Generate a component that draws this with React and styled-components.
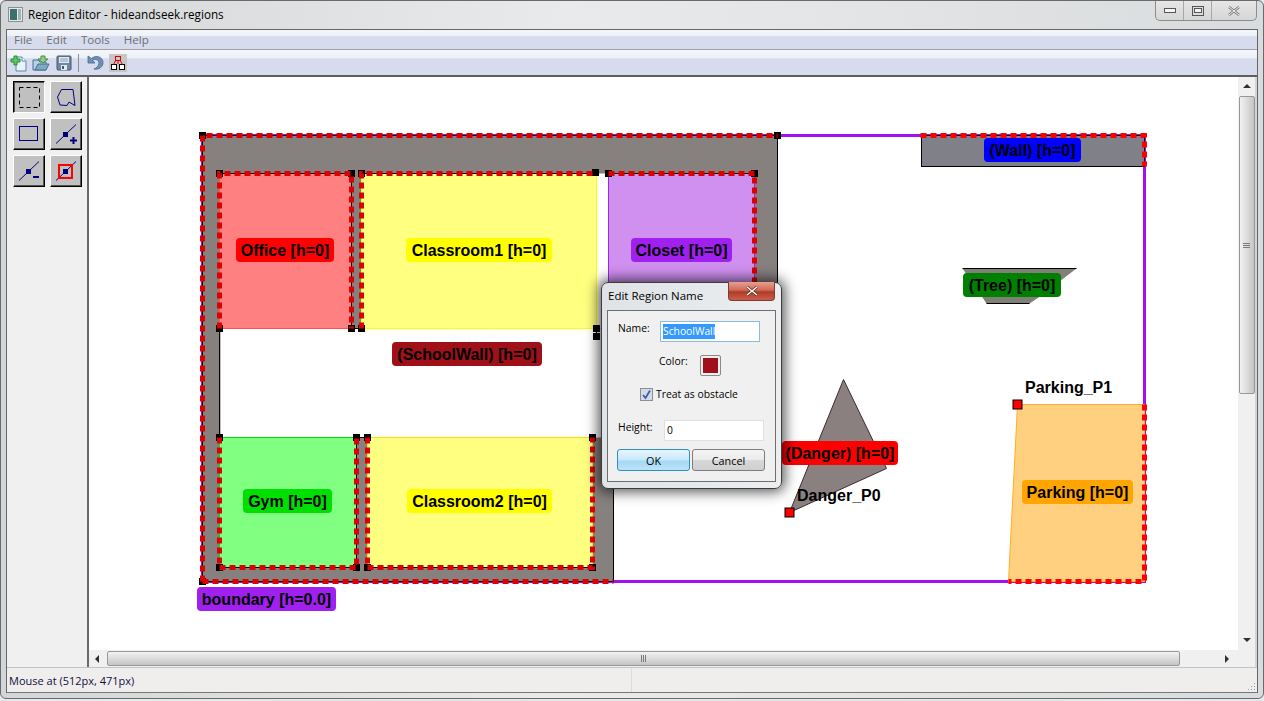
import React from 'react';
import styled, { createGlobalStyle } from 'styled-components';

const uiFont = '"Open Sans", "Noto Sans", "Liberation Sans", sans-serif';

const GlobalStyle = createGlobalStyle`
  html, body {
    margin: 0;
    padding: 0;
    background: #e6e8ea;
    overflow: hidden;
  }
`;

const Win = styled.div`
  box-sizing: border-box;
  width: 1264px;
  height: 699px;
  display: flex;
  flex-direction: column;
  position: relative;
  overflow: hidden;
  background: linear-gradient(90deg, #d3d6d8 0, #e9eaeb 45%, #d9dcde 100%);
  border: 1px solid #6a6a6a;
  border-radius: 6px;
  font-family: ${uiFont};
  font-size: 11.5px;
  color: #000;
`;

const TitleBar = styled.div`
  height: 28px;
  flex: none;
  display: flex;
  align-items: flex-start;
  padding: 6px 6px 0 7px;
  box-sizing: border-box;
  gap: 5px;
`;

const TitleText = styled.div`
  flex: 1;
  margin-top: -1px;
  font-size: 11.7px;
  line-height: 16px;
`;

const CaptionGroup = styled.div`
  display: flex;
  margin-top: -6px;
  height: 19px;
  border: 1px solid #8c8c8c;
  border-top: none;
  border-radius: 0 0 5px 5px;
  background: linear-gradient(#e6e6e6, #d6d6d6);
`;

const CaptionBtn = styled.div`
  width: ${({ $w }) => $w}px;
  display: flex;
  align-items: center;
  justify-content: center;
  border-right: ${({ $last }) => ($last ? 'none' : '1px solid #a8a8a8')};
`;

const Frame = styled.div`
  flex: none;
  height: 664px;
  margin: 0 5px;
  display: flex;
  flex-direction: column;
  border: 1px solid #666;
  border-bottom-color: #777;
  box-sizing: border-box;
  background: #f0f0f0;
`;

const barGradient = `linear-gradient(#f4f6fa 0, #eef1f8 30%, #d6dcee 35%, #d6dcee 100%)`;

const MenuBar = styled.div`
  height: 19px;
  flex: none;
  display: flex;
  align-items: center;
  padding-left: 7px;
  gap: 14px;
  background: ${barGradient};
  border-bottom: 1px solid #a0a0a8;
  color: #6f6f6f;
  font-size: 11.6px;
`;

const ToolBar = styled.div`
  height: 25px;
  flex: none;
  display: flex;
  align-items: center;
  padding-left: 2px;
  gap: 5px;
  background: ${barGradient};
  border-bottom: 2px solid #5e5e5e;
`;

const ToolIcon = styled.div`
  width: 18px;
  height: 18px;
  display: flex;
  align-items: center;
  justify-content: center;
  background: ${({ $on }) => ($on ? '#c6c6c6' : 'transparent')};
`;

const ToolSep = styled.div`
  width: 1px;
  height: 18px;
  margin-right: 2px;
  background: #8a8f96;
`;

const Body = styled.div`
  flex: 1;
  min-height: 0;
  display: flex;
`;

const SidePanel = styled.div`
  width: 82px;
  flex: none;
  box-sizing: border-box;
  padding: 4px 0 0 6px;
  background: #f0f0f0;
  border-right: 2px solid #6a6a6a;
`;

const ToolGrid = styled.div`
  display: grid;
  grid-template-columns: 32px 32px;
  grid-auto-rows: 32px;
  gap: 5px;
`;

const ToolBtn = styled.div`
  box-sizing: border-box;
  background: #c0c0c0;
  border: 1px solid;
  border-color: ${({ $on }) => ($on ? '#000 #fff #fff #000' : '#fff #000 #000 #fff')};
  box-shadow: ${({ $on }) => ($on ? 'inset 1px 1px 0 #555' : 'inset -1px -1px 0 #555')};
  display: flex;
  align-items: center;
  justify-content: center;
`;

const ViewGrid = styled.div`
  flex: 1;
  min-width: 0;
  display: grid;
  grid-template-columns: 1fr 17px;
  grid-template-rows: 1fr 17px;
  background: #f0f0f0;
  border-right: 2px solid #d4d4d4;
`;

const Canvas = styled.div`
  position: relative;
  background: #fff;
  overflow: hidden;
`;

const Drawing = styled.svg`
  position: absolute;
  left: 0;
  top: 0;
  width: 100%;
  height: 100%;
  display: block;
`;

const RegionLabel = styled.div`
  position: absolute;
  left: ${({ $x }) => $x - 89}px;
  top: ${({ $y }) => $y - 77}px;
  box-sizing: border-box;
  width: ${({ $w }) => $w}px;
  height: 24px;
  padding-top: 1px;
  display: flex;
  align-items: center;
  justify-content: center;
  background: ${({ $bg }) => $bg};
  border-radius: 4px;
  font-family: "Liberation Sans", Arial, sans-serif;
  font-weight: 700;
  font-size: 16px;
  white-space: nowrap;
  color: #000;
`;

const PointLabel = styled.div`
  position: absolute;
  left: ${({ $x }) => $x - 89}px;
  top: ${({ $y }) => $y - 77}px;
  font-family: "Liberation Sans", Arial, sans-serif;
  font-weight: 700;
  font-size: 16px;
  line-height: 18px;
  white-space: nowrap;
  color: #000;
`;

const VBar = styled.div`
  display: flex;
  flex-direction: column;
  align-items: center;
  background: #f0f0f0;
`;

const HBar = styled.div`
  display: flex;
  align-items: center;
  background: #f0f0f0;
`;

const BarSpace = styled.div`
  flex: 1;
`;

const ArrowCell = styled.div`
  flex: none;
  width: ${({ $w }) => $w}px;
  height: ${({ $h }) => $h}px;
  display: flex;
  align-items: center;
  justify-content: center;
`;

const Thumb = styled.div`
  box-sizing: border-box;
  flex: none;
  display: flex;
  align-items: center;
  justify-content: center;
  border: 1px solid #979797;
  border-radius: 2px;
  ${({ $vertical }) =>
    $vertical
      ? `width: 16px; height: 298px; background: linear-gradient(90deg, #f2f2f2, #dcdcdc 50%, #c4c4c4);`
      : `width: 1073px; height: 15px; background: linear-gradient(#f2f2f2, #dcdcdc 50%, #c4c4c4);`}
`;

const Grip = styled.div`
  display: flex;
  flex-direction: ${({ $vertical }) => ($vertical ? 'column' : 'row')};
  gap: 1px;
  & > i {
    display: block;
    background: #7a7a7a;
    ${({ $vertical }) => ($vertical ? 'width: 7px; height: 1px;' : 'width: 1px; height: 7px;')}
  }
`;

const Corner = styled.div`
  background: #f0f0f0;
`;

const StatusBar = styled.div`
  height: 24px;
  flex: none;
  display: flex;
  align-items: center;
  background: #f0eded;
  border-top: 1px solid #c4c4c4;
  position: relative;
`;

const StatusCell = styled.div`
  width: 625px;
  height: 100%;
  box-sizing: border-box;
  padding-left: 2px;
  display: flex;
  align-items: center;
  color: #101040;
  font-size: 11px;
  border-right: 1px solid #dcdcdc;
`;

const SizeGrip = styled.svg`
  position: absolute;
  right: 1px;
  bottom: 1px;
`;

const Dialog = styled.div`
  position: absolute;
  left: 600px;
  top: 281px;
  width: 181px;
  height: 207px;
  box-sizing: border-box;
  border: 1px solid #3c3c3c;
  border-radius: 7px;
  background: linear-gradient(90deg, #dfe3e6, #eceef0);
  box-shadow: 0 0 13px 3px rgba(0, 0, 0, 0.65);
  padding: 0 5px 6px;
  display: flex;
  flex-direction: column;
`;

const DialogTitle = styled.div`
  height: 27px;
  flex: none;
  box-sizing: border-box;
  display: flex;
  align-items: center;
  padding: 0 0 2px 1px;
  font-size: 11.5px;
`;

const CloseBtn = styled.div`
  position: absolute;
  right: 6px;
  top: -1px;
  width: 47px;
  height: 19px;
  box-sizing: border-box;
  border: 1px solid #7a3a30;
  border-top: none;
  border-radius: 0 0 4px 4px;
  background: linear-gradient(#e8a090 0, #cf6a58 45%, #b03a28 55%, #c8604c 100%);
  display: flex;
  align-items: center;
  justify-content: center;
`;

const DialogBody = styled.div`
  flex: 1;
  box-sizing: border-box;
  border: 1px solid #6e6e6e;
  background: #f0f0f0;
  padding: 10px 9px 0 10px;
  display: flex;
  flex-direction: column;
`;

const FieldRow = styled.div`
  display: flex;
  align-items: flex-start;
  height: ${({ $h }) => $h}px;
  padding-left: ${({ $pl }) => $pl || 0}px;
`;

const FieldLabel = styled.div`
  width: ${({ $w }) => $w}px;
  flex: none;
  font-size: 10.4px;
  line-height: 15px;
  margin-top: ${({ $mt }) => $mt || 0}px;
`;

const TextBox = styled.div`
  box-sizing: border-box;
  width: 100px;
  height: 21px;
  background: #fff;
  border: 1px solid ${({ $focus }) => ($focus ? '#8cbcdc' : '#e0e0e0')};
  padding: 2px 2px;
  font-size: 10.3px;
  line-height: 15px;
`;

const Selected = styled.span`
  display: inline-block;
  background: #3399ff;
  color: #fff;
  line-height: 15px;
`;

const Swatch = styled.div`
  box-sizing: border-box;
  width: 21px;
  height: 21px;
  border: 1px solid #8a8a8a;
  border-radius: 2px;
  background: #efefef;
  padding: 2px;
  display: flex;
  & > i {
    flex: 1;
    background: #a01018;
  }
`;

const Check = styled.div`
  box-sizing: border-box;
  width: 13px;
  height: 13px;
  border: 1px solid #8e8e8e;
  background: #d4dbe8;
  display: flex;
  align-items: center;
  justify-content: center;
  margin-right: 3px;
`;

const CheckText = styled.div`
  font-size: 10.4px;
  line-height: 13px;
`;

const ButtonRow = styled.div`
  display: flex;
  gap: 2px;
  margin-left: -1px;
`;

const DlgButton = styled.div`
  box-sizing: border-box;
  width: 73px;
  height: 22px;
  border-radius: 3px;
  display: flex;
  align-items: center;
  justify-content: center;
  font-size: 10.8px;
  border: 1px solid ${({ $primary }) => ($primary ? '#2d8fc0' : '#7d7d7d')};
  background: ${({ $primary }) =>
    $primary
      ? 'linear-gradient(#e8f6fd, #c6e8fa 50%, #a6d8f4 55%, #bce4f8)'
      : 'linear-gradient(#f4f4f4, #ebebeb 48%, #d8d8d8 52%, #cfcfcf)'};
`;

const LABELS = [
  { text: 'Office [h=0]', x: 236, y: 238, w: 98, bg: '#ff0000' },
  { text: 'Classroom1 [h=0]', x: 406, y: 238, w: 146, bg: '#ffff00' },
  { text: 'Closet [h=0]', x: 631, y: 238, w: 101, bg: '#a020f0' },
  { text: '(SchoolWall) [h=0]', x: 392, y: 342, w: 150, bg: '#a01018' },
  { text: 'Gym [h=0]', x: 243, y: 489, w: 89, bg: '#00e000' },
  { text: 'Classroom2 [h=0]', x: 407, y: 489, w: 145, bg: '#ffff00' },
  { text: 'boundary [h=0.0]', x: 197, y: 587, w: 139, bg: '#a020f0' },
  { text: '(Wall) [h=0]', x: 984, y: 138, w: 97, bg: '#0000ff' },
  { text: '(Tree) [h=0]', x: 963, y: 273, w: 98, bg: '#008000' },
  { text: '(Danger) [h=0]', x: 782, y: 441, w: 116, bg: '#ff0000' },
  { text: 'Parking [h=0]', x: 1022, y: 480, w: 111, bg: '#ffa500' },
];

const HANDLES = [
  [202, 135], [777, 135], [219, 173], [351, 173], [361, 173], [595, 172], [608, 173], [754, 173],
  [219, 328], [351, 328], [361, 328], [596, 328], [596, 336], [219, 437], [356, 437], [367, 437],
  [592, 437], [219, 567], [356, 567], [367, 567], [592, 567], [202, 581],
];

const ROOMS = [
  { x: 219, y: 173, w: 132, h: 155, fill: '#ff8080', edge: '#ff5050' },
  { x: 361, y: 173, w: 235, h: 155, fill: '#ffff80', edge: '#ffff00' },
  { x: 608, y: 173, w: 146, h: 163, fill: '#d090f0', edge: '#a020f0' },
  { x: 219, y: 437, w: 137, h: 130, fill: '#80ff80', edge: '#00e000' },
  { x: 367, y: 437, w: 225, h: 130, fill: '#ffff80', edge: '#ffe000' },
];

const DASHES = [
  'M202 581V135H777',
  'M202 581H613',
  'M219 328V173H351V328',
  'M361 328V173H596',
  'M608 173H754V336',
  'M219 437V567H356V437',
  'M367 437V567H592V437',
];

const SELECT_DASHES = ['M920 135H1144V166', 'M1144 404V581H1008'];

// half pixel offset so the 1px outlines land on whole pixels
const MapDrawing = () => (
  <Drawing viewBox="88.5 76.5 1149 573">
    <rect x="202" y="135" width="942" height="446" fill="none" stroke="#a010f0" strokeWidth="3" />
    <rect x="921" y="135" width="223" height="31" fill="#808088" stroke="#000" strokeWidth="1" />
    <path d="M202 135H777V336H613V581H202Z" fill="#86807f" stroke="#000" strokeWidth="1" />
    <rect x="220" y="328" width="393" height="109" fill="#fff" />
    <rect x="596" y="173" width="12" height="155" fill="#fff" />
    <path d="M219 328V437M351 328H361M356 437H367M596 328V336" fill="none" stroke="#000" strokeWidth="1" />
    {ROOMS.map((r) => (
      <rect key={r.x + '-' + r.y} x={r.x} y={r.y} width={r.w} height={r.h} fill={r.fill} stroke={r.edge} strokeWidth="1" />
    ))}
    <path d="M219 173H351V328M361 173H596M608 173H754M219 567H356V437M367 567H592" fill="none" stroke="#000" strokeWidth="1" />
    <path d="M962 268H1076L1038 297L1029 303H986L982 297Z" fill="#808078" stroke="none" />
    <path d="M962 268H1076M986 303H1029" stroke="#000" strokeWidth="1" fill="none" />
    <path d="M843 379L886 468L789 512Z" fill="#8a8080" stroke="#3c2c2c" strokeWidth="1" />
    <path d="M1017 404H1144V581H1008Z" fill="#ffd080" stroke="#ffb020" strokeWidth="1" />
    {HANDLES.map(([x, y]) => (
      <rect key={x + '-' + y} x={x - 3.5} y={y - 3.5} width="7" height="7" fill="#000" />
    ))}
    {DASHES.map((d) => (
      <path key={d} d={d} fill="none" stroke="#dc0000" strokeWidth="5" strokeDasharray="6 4" />
    ))}
    {SELECT_DASHES.map((d) => (
      <path key={d} d={d} fill="none" stroke="#ff0000" strokeWidth="5" strokeDasharray="6 4" />
    ))}
    <rect x="1012.5" y="399.5" width="9" height="9" fill="#ff0000" stroke="#000" strokeWidth="1" />
    <rect x="784.5" y="507.5" width="9" height="9" fill="#ff0000" stroke="#000" strokeWidth="1" />
  </Drawing>
);

const Navy = '#00007f';

const SelectRectIcon = () => (
  <svg width="24" height="24" viewBox="0 0 24 24">
    <rect x="2.5" y="2.5" width="20" height="20" fill="none" stroke="#000" strokeDasharray="4 3" />
  </svg>
);
const PolyIcon = () => (
  <svg width="24" height="24" viewBox="0 0 24 24">
    <path d="M7.500 4.500H19L21 20.500L15 17L13 20.500L6 20L3.500 12Z" fill="none" stroke={Navy} />
  </svg>
);
const RectIcon = () => (
  <svg width="24" height="24" viewBox="0 0 24 24">
    <rect x="2.500" y="4.500" width="18" height="14" fill="none" stroke={Navy} />
  </svg>
);
const PointIcon = ({ children }) => (
  <svg width="28" height="28" viewBox="0 0 28 28">
    <path d="M4 23.500L24 4.500" stroke={Navy} fill="none" />
    <rect x="11" y="12" width="5" height="5" fill={Navy} />
    {children}
  </svg>
);

const NewIcon = () => (
  <svg width="17" height="18" viewBox="0 0 17 18">
    <path d="M6 3H12L16 7V17H6Z" fill="#e8f2fb" stroke="#5a88b0" />
    <path d="M12 3V7H16" fill="#fff" stroke="#5a88b0" />
    <path d="M4 2V5H1V8H4V11H7V8H10V5H7V2Z" fill="#5cc85c" stroke="#2d8a3c" />
  </svg>
);
const OpenIcon = () => (
  <svg width="18" height="18" viewBox="0 0 18 18">
    <path d="M1 16V6H6L8 8H14V16Z" fill="#b4d0e4" stroke="#45708f" />
    <path d="M3 16L6 10H17L14 16Z" fill="#7ea8c4" stroke="#45708f" />
    <path d="M9 2H13V5H16L11 9L6 5H9Z" fill="#8fd080" stroke="#4a8a4a" />
  </svg>
);
const SaveIcon = () => (
  <svg width="16" height="16" viewBox="0 0 16 16">
    <rect x="1" y="1" width="14" height="14" rx="1" fill="#6f88a4" stroke="#47586c" />
    <rect x="3" y="2" width="10" height="6" fill="#dfe8f0" />
    <path d="M4 4H12M4 6H12" stroke="#8aa0b8" />
    <rect x="5" y="10" width="6" height="5" fill="#e4e8ec" />
    <rect x="6" y="11" width="2" height="3" fill="#47586c" />
  </svg>
);
const UndoIcon = () => (
  <svg width="17" height="17" viewBox="0 0 17 17">
    <path d="M1 2V9H8L5.500 6.500C8 4.500 12 5.500 12 9C12 12 9.500 14 7 15C12 16 16 13 16 8.500C16 3 9 0.500 4.500 4.500Z" fill="#6f92b4" stroke="#47678a" strokeWidth="0.8" />
  </svg>
);
const TreeIcon = () => (
  <svg width="16" height="16" viewBox="0 0 16 16">
    <rect x="5.500" y="1.500" width="5" height="4" fill="none" stroke="#e00000" />
    <rect x="1.500" y="9.500" width="5" height="5" fill="#fff" stroke="#000" />
    <rect x="9.500" y="9.500" width="5" height="5" fill="#fff" stroke="#000" />
    <path d="M6 5L3.500 9.500M10 5L12.500 9.500M8 5.500V9" stroke="#e00000" fill="none" />
  </svg>
);

const Tri = ({ dir }) => {
  const pts = { up: '0,5 4,1 8,5', down: '0,1 8,1 4,5', left: '5,0 5,8 1,4', right: '1,0 1,8 5,4' };
  return (
    <svg width="8" height="8" viewBox="0 0 8 8">
      <polygon points={pts[dir]} fill="#303030" />
    </svg>
  );
};

const App = () => (
  <>
    <GlobalStyle />
    <Win>
      <TitleBar>
        <svg width="15" height="15" viewBox="0 0 15 15">
          <rect x="0.5" y="0.500" width="14" height="14" fill="#e6e9ea" stroke="#8a8f92" />
          <rect x="2" y="2" width="7" height="11" fill="#3f6f6a" />
          <rect x="10" y="2" width="3" height="11" fill="#9fb4b8" />
        </svg>
        <TitleText>Region Editor - hideandseek.regions</TitleText>
        <CaptionGroup>
          <CaptionBtn $w={27}>
            <svg width="12" height="6" viewBox="0 0 12 6">
              <rect x="0.500" y="0.500" width="11" height="4" fill="#f4f4f4" stroke="#555" />
            </svg>
          </CaptionBtn>
          <CaptionBtn $w={27}>
            <svg width="12" height="10" viewBox="0 0 12 10">
              <rect x="0.500" y="0.500" width="11" height="9" fill="none" stroke="#555" />
              <rect x="2.500" y="2.500" width="7" height="4" fill="#f4f4f4" stroke="#555" />
            </svg>
          </CaptionBtn>
          <CaptionBtn $w={44} $last>
            <svg width="12" height="10" viewBox="0 0 12 10">
              <path d="M1 1L11 9M11 1L1 9" stroke="#777" strokeWidth="2.400" />
              <path d="M1 1L11 9M11 1L1 9" stroke="#f4f4f4" strokeWidth="1" />
            </svg>
          </CaptionBtn>
        </CaptionGroup>
      </TitleBar>

      <Frame>
        <MenuBar>
          <span>File</span>
          <span>Edit</span>
          <span>Tools</span>
          <span>Help</span>
        </MenuBar>
        <ToolBar>
          <ToolIcon><NewIcon /></ToolIcon>
          <ToolIcon><OpenIcon /></ToolIcon>
          <ToolIcon><SaveIcon /></ToolIcon>
          <ToolSep />
          <ToolIcon><UndoIcon /></ToolIcon>
          <ToolIcon $on><TreeIcon /></ToolIcon>
        </ToolBar>
        <Body>
          <SidePanel>
            <ToolGrid>
              <ToolBtn $on><SelectRectIcon /></ToolBtn>
              <ToolBtn><PolyIcon /></ToolBtn>
              <ToolBtn><RectIcon /></ToolBtn>
              <ToolBtn>
                <PointIcon>
                  <path d="M21.500 17V24M18 20.500H25" stroke={Navy} strokeWidth="2" />
                </PointIcon>
              </ToolBtn>
              <ToolBtn>
                <PointIcon>
                  <path d="M18 20H24" stroke={Navy} strokeWidth="2" />
                </PointIcon>
              </ToolBtn>
              <ToolBtn>
                <PointIcon>
                  <rect x="7" y="8" width="13" height="13" fill="none" stroke="#ff0000" strokeWidth="2" />
                </PointIcon>
              </ToolBtn>
            </ToolGrid>
          </SidePanel>
          <ViewGrid>
            <Canvas>
              <MapDrawing />
              {LABELS.map((l) => (
                <RegionLabel key={l.text} $x={l.x} $y={l.y} $w={l.w} $bg={l.bg}>
                  {l.text}
                </RegionLabel>
              ))}
              <PointLabel $x={1025} $y={379}>Parking_P1</PointLabel>
              <PointLabel $x={797} $y={487}>Danger_P0</PointLabel>
            </Canvas>
            <VBar>
              <ArrowCell $w={17} $h={19}><Tri dir="up" /></ArrowCell>
              <Thumb $vertical>
                <Grip $vertical><i /><i /><i /></Grip>
              </Thumb>
              <BarSpace />
              <ArrowCell $w={17} $h={19}><Tri dir="down" /></ArrowCell>
            </VBar>
            <HBar>
              <ArrowCell $w={18} $h={17}><Tri dir="left" /></ArrowCell>
              <Thumb>
                <Grip><i /><i /><i /></Grip>
              </Thumb>
              <BarSpace />
              <ArrowCell $w={20} $h={17}><Tri dir="right" /></ArrowCell>
            </HBar>
            <Corner />
          </ViewGrid>
        </Body>
        <StatusBar>
          <StatusCell>Mouse at (512px, 471px)</StatusCell>
          <SizeGrip width="10" height="10" viewBox="0 0 10 10">
            <path d="M8 2h1v1h-1zM5 5h1v1h-1zM8 5h1v1h-1zM2 8h1v1h-1zM5 8h1v1h-1zM8 8h1v1h-1z" fill="#9a9a9a" />
          </SizeGrip>
        </StatusBar>
      </Frame>

      <Dialog>
        <DialogTitle>Edit Region Name</DialogTitle>
        <CloseBtn>
          <svg width="14" height="10" viewBox="0 0 14 10">
            <path d="M2 1L12 9M12 1L2 9" stroke="#5c2a22" strokeWidth="2.800" />
            <path d="M2 1L12 9M12 1L2 9" stroke="#fff" strokeWidth="1.500" />
          </svg>
        </CloseBtn>
        <DialogBody>
          <FieldRow $h={34}>
            <FieldLabel $w={42}>Name:</FieldLabel>
            <TextBox $focus><Selected>SchoolWall</Selected></TextBox>
          </FieldRow>
          <FieldRow $h={33} $pl={41}>
            <FieldLabel $w={41} $mt={-1}>Color:</FieldLabel>
            <Swatch><i /></Swatch>
          </FieldRow>
          <FieldRow $h={32} $pl={22}>
            <Check>
              <svg width="11" height="11" viewBox="0 0 11 11">
                <path d="M2 6L4.500 9L9 1.500" fill="none" stroke="#3c5ea8" strokeWidth="1.800" />
              </svg>
            </Check>
            <CheckText>Treat as obstacle</CheckText>
          </FieldRow>
          <FieldRow $h={29}>
            <FieldLabel $w={46}>Height:</FieldLabel>
            <TextBox>0</TextBox>
          </FieldRow>
          <ButtonRow>
            <DlgButton $primary>OK</DlgButton>
            <DlgButton>Cancel</DlgButton>
          </ButtonRow>
        </DialogBody>
      </Dialog>
    </Win>
  </>
);

export default App;
